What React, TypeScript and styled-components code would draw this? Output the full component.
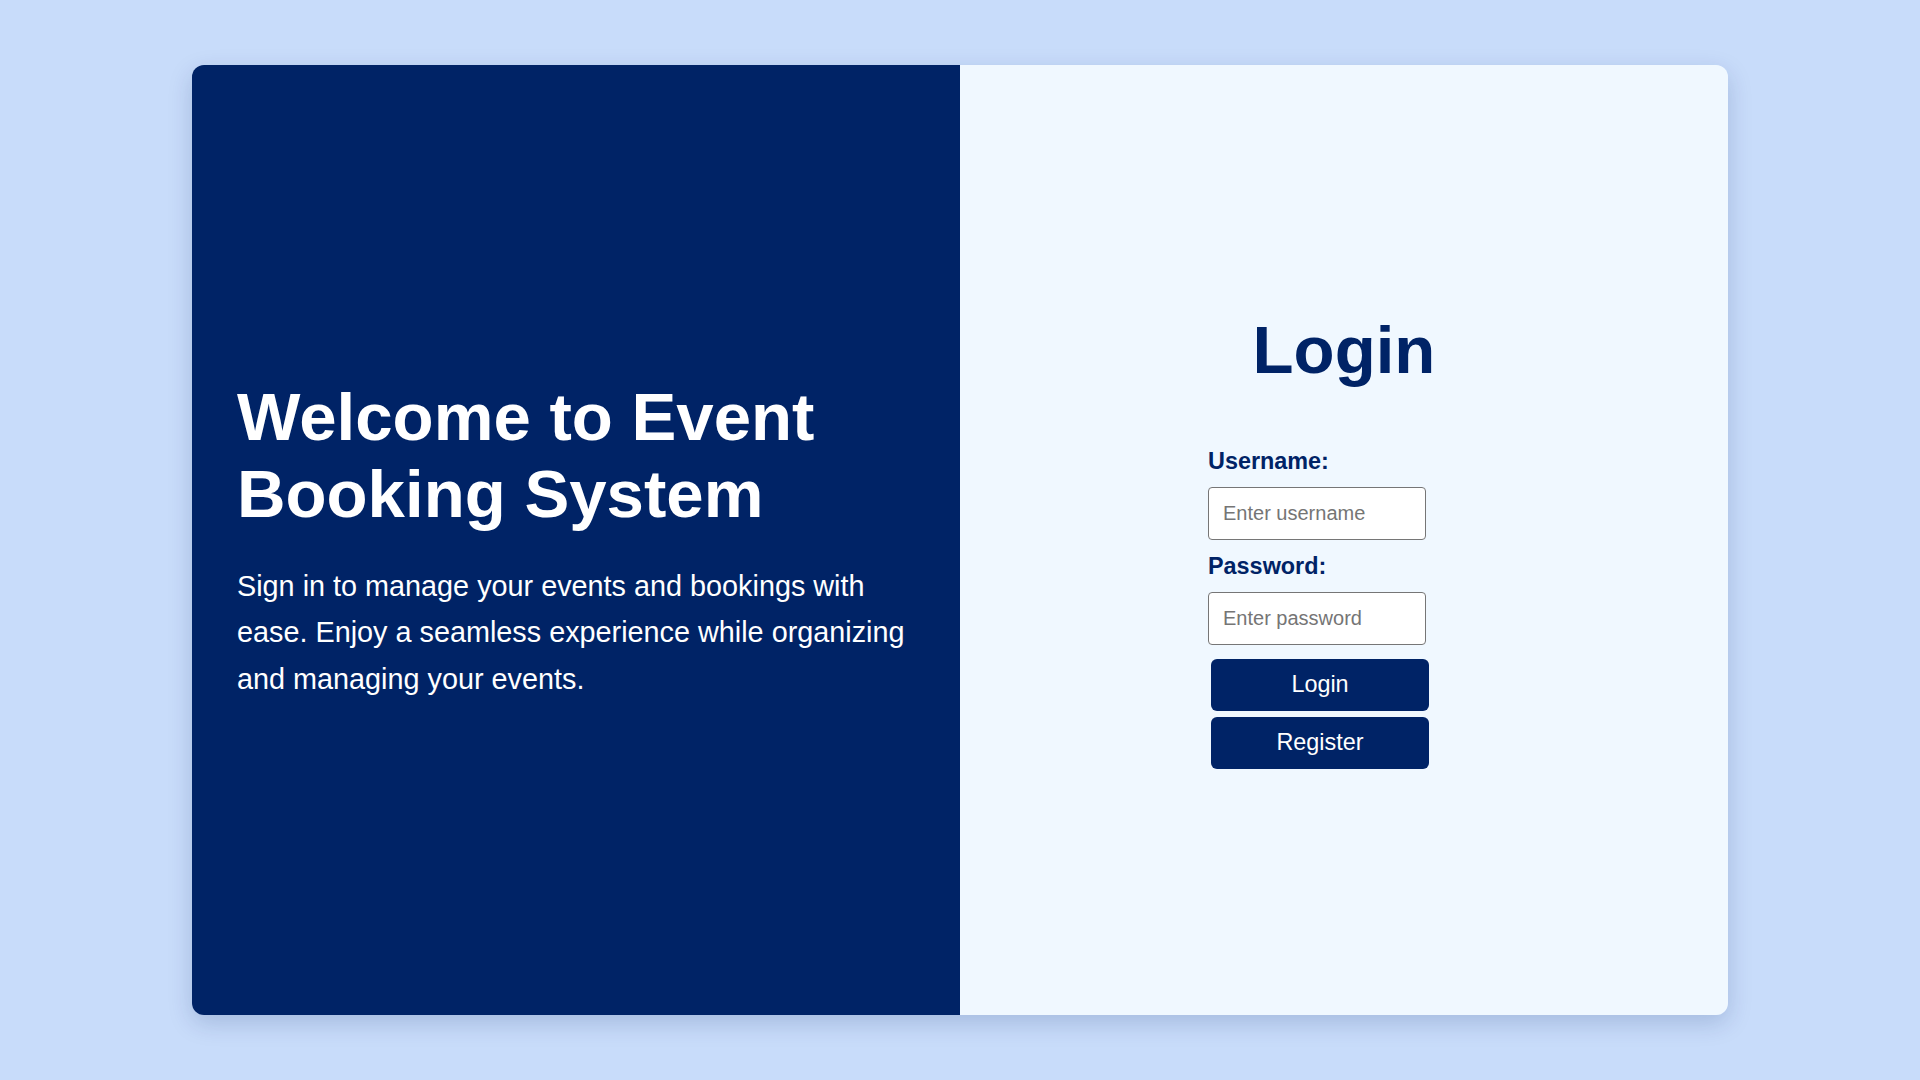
import styled, { createGlobalStyle } from 'styled-components';

const GlobalStyle = createGlobalStyle`
  * {
    box-sizing: border-box;
  }
  body {
    margin: 0;
    font-family: "Liberation Sans", Arial, sans-serif;
    background: #c8dcfa;
  }
`

const Page = styled.div`
  display: flex;
  align-items: center;
  justify-content: center;
  width: 100vw;
  height: 100vh;
`

const Card = styled.div`
  display: grid;
  grid-template-columns: 1fr 1fr;
  width: 80vw;
  height: 88vh;
  border-radius: 12px;
  overflow: hidden;
  box-shadow: 0 8px 24px rgba(0, 35, 102, 0.18);
`

const InfoPanel = styled.section`
  min-width: 0;
  display: flex;
  flex-direction: column;
  justify-content: center;
  padding: 0 45px;
  background: #002366;
  color: #ffffff;
`

const Welcome = styled.h1`
  margin: 0;
  font-size: 3.5vw;
  font-weight: 700;
  line-height: normal;
`

const Intro = styled.p`
  margin: 31px 0 0;
  font-size: 1.5vw;
  line-height: 1.6;
`

const FormPanel = styled.section`
  min-width: 0;
  display: flex;
  flex-direction: column;
  align-items: center;
  justify-content: center;
  background: #f0f8ff;
`

const Title = styled.h2`
  margin: 0 0 60px;
  font-size: 3.5vw;
  font-weight: 700;
  line-height: normal;
  color: #002366;
`

const Form = styled.form`
  display: flex;
  flex-direction: column;
  align-items: flex-start;
  gap: 12.5px;
  width: 272px;
`

const Label = styled.label`
  font-size: 23.4px;
  font-weight: 700;
  color: #002366;
`

const Input = styled.input`
  width: 218px;
  height: 53px;
  padding: 0 14px;
  font-family: "Liberation Sans", Arial, sans-serif;
  font-size: 20px;
  color: #222;
  background: #ffffff;
  border: 1px solid #767676;
  border-radius: 4px;

  &::placeholder {
    color: #757575;
  }
`

const ButtonGroup = styled.div`
  display: flex;
  flex-direction: column;
  gap: 6px;
  margin-top: 1px;
  padding-left: 3px;
`

const Button = styled.button`
  width: 218px;
  height: 52px;
  border: none;
  border-radius: 6px;
  background: #002366;
  color: #ffffff;
  font-family: "Liberation Sans", Arial, sans-serif;
  font-size: 23.4px;
  cursor: pointer;
`

const App = (): JSX.Element => {
  return (
    <>
      <GlobalStyle />
      <Page>
        <Card>
          <InfoPanel>
            <Welcome>Welcome to Event Booking System</Welcome>
            <Intro>
              Sign in to manage your events and bookings with ease. Enjoy a seamless experience while organizing and managing your events.
            </Intro>
          </InfoPanel>
          <FormPanel>
            <Title>Login</Title>
            <Form onSubmit={(e) => e.preventDefault()}>
              <Label htmlFor="username">Username:</Label>
              <Input id="username" type="text" placeholder="Enter username" />
              <Label htmlFor="password">Password:</Label>
              <Input id="password" type="password" placeholder="Enter password" />
              <ButtonGroup>
                <Button type="submit">Login</Button>
                <Button type="button">Register</Button>
              </ButtonGroup>
            </Form>
          </FormPanel>
        </Card>
      </Page>
    </>
  )
}

export default App
